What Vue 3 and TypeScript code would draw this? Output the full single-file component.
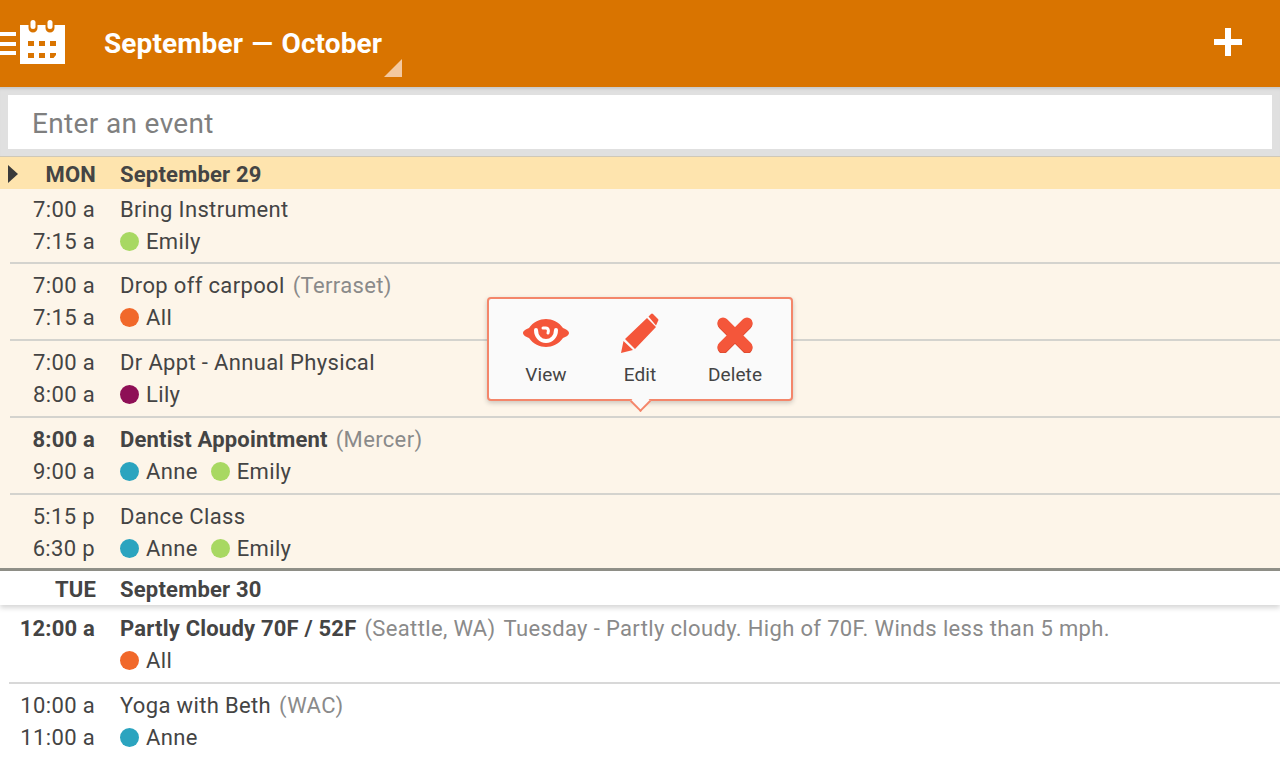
<script setup lang="ts">
interface Person { name: string; color: string }
interface Row { start: string; end: string; title: string; loc?: string; desc?: string; bold?: boolean; people: Person[] }
const emily = { name: 'Emily', color: '#a8d862' }
const all = { name: 'All', color: '#f1682a' }
const lily = { name: 'Lily', color: '#8e0f56' }
const anne = { name: 'Anne', color: '#2ba4bf' }
const monday: Row[] = [
  { start: '7:00 a', end: '7:15 a', title: 'Bring Instrument', people: [emily] },
  { start: '7:00 a', end: '7:15 a', title: 'Drop off carpool', loc: '(Terraset)', people: [all] },
  { start: '7:00 a', end: '8:00 a', title: 'Dr Appt - Annual Physical', people: [lily] },
  { start: '8:00 a', end: '9:00 a', title: 'Dentist Appointment', loc: '(Mercer)', bold: true, people: [anne, emily] },
  { start: '5:15 p', end: '6:30 p', title: 'Dance Class', people: [anne, emily] },
]
const tuesday: Row[] = [
  { start: '12:00 a', end: '', title: 'Partly Cloudy 70F / 52F', loc: '(Seattle, WA)', desc: 'Tuesday - Partly cloudy. High of 70F. Winds less than 5 mph.', bold: true, people: [all] },
  { start: '10:00 a', end: '11:00 a', title: 'Yoga with Beth', loc: '(WAC)', people: [anne] },
]
</script>

<template>
  <div class="page">
    <header class="bar">
      <div class="menu"><i></i><i></i><i></i></div>
      <svg class="cal" width="45" height="44" viewBox="0 0 45 44">
        <path fill="#fff" fill-rule="evenodd" d="M0 5h8.500v3a4.500 4.500 0 0 0 9 0V5h8v3a4.500 4.500 0 0 0 9 0V5H45v39H0Z M8 21v5h6v-5Z M19 21v5h6v-5Z M30 21v5h6v-5Z M8 33v5h6v-5Z M19 33v5h6v-5Z M30 33v5h3.500l2.500-3v-2Z"/>
        <rect x="10.500" y="0" width="5" height="9" rx="2.500" fill="#fff"/>
        <rect x="27.500" y="0" width="5" height="9" rx="2.500" fill="#fff"/>
      </svg>
      <h1 class="title">September — October</h1>
      <span class="corner"></span>
      <svg class="plus" width="28" height="28" viewBox="0 0 28 28"><path fill="#fff" d="M11 0h6v11h11v6H17v11h-6V17H0v-6h11Z"/></svg>
    </header>
    <div class="search"><div class="input">Enter an event</div></div>
    <section class="day today">
      <div class="day-head">
        <span class="arrow"></span>
        <span class="dow">MON</span>
        <span class="date">September 29</span>
      </div>
      <div v-for="(r, i) in monday" :key="i" class="row">
        <div class="times"><div :class="{ strong: r.bold }">{{ r.start }}</div><div>{{ r.end }}</div></div>
        <div class="body">
          <div class="line"><span :class="{ strong: r.bold }">{{ r.title }}</span><span v-if="r.loc" class="muted">{{ r.loc }}</span></div>
          <div class="line people"><span v-for="p in r.people" :key="p.name" class="person"><i class="dot" :style="{ background: p.color }"></i>{{ p.name }}</span></div>
        </div>
      </div>
    </section>
    <section class="day next">
      <div class="day-head">
        <span class="dow">TUE</span>
        <span class="date">September 30</span>
      </div>
      <div v-for="(r, i) in tuesday" :key="i" class="row">
        <div class="times"><div :class="{ strong: r.bold }">{{ r.start }}</div><div>{{ r.end }}</div></div>
        <div class="body">
          <div class="line"><span :class="{ strong: r.bold }">{{ r.title }}</span><span v-if="r.loc" class="muted">{{ r.loc }}</span><span v-if="r.desc" class="muted">{{ r.desc }}</span></div>
          <div class="line people"><span v-for="p in r.people" :key="p.name" class="person"><i class="dot" :style="{ background: p.color }"></i>{{ p.name }}</span></div>
        </div>
      </div>
    </section>
    <div class="pop">
      <div class="act">
        <svg class="eye" width="46" height="28" viewBox="0 0 46 28">
          <path fill="#f4563a" d="M6 9C10 3 17 0 23 0s13 3 17 9c3 1 6 3 6 5s-3 4-6 5c-4 6-11 9-17 9S10 25 6 19c-3-1-6-3-6-5s3-4 6-5Z"/>
          <path fill="none" stroke="#fff" stroke-width="4" stroke-linecap="round" d="M13 11c0 6 4 11 10 11s10-5 10-11"/>
          <path fill="none" stroke="#fff" stroke-width="3" stroke-linecap="round" d="M20 9h3c2 0 3 2 2 5"/>
        </svg>
        <span>View</span>
      </div>
      <div class="act">
        <svg class="pen" width="38" height="40" viewBox="0 0 38 40">
          <path fill="#f4563a" d="M0 40 2.500 28 12 37ZM4 26 26 5l9 9-21 22ZM27.500 3.500 30 1q1-1 2 0l5 5q1 1 0 2l-2 4.500Z"/>
        </svg>
        <span>Edit</span>
      </div>
      <div class="act">
        <svg class="del" width="36" height="36" viewBox="0 0 36 36">
          <path fill="none" stroke="#d8462c" stroke-width="11" stroke-linecap="round" d="M6 7l24 24M30 7 6 31"/>
          <path fill="none" stroke="#f4563a" stroke-width="11" stroke-linecap="round" d="M6 6l24 24M30 6 6 30"/>
        </svg>
        <span>Delete</span>
      </div>
      <span class="tip"></span>
    </div>
  </div>
</template>

<style scoped>
.page { position: relative; width: 1280px; height: 757px; overflow: hidden; background: #fff; font-family: Roboto, sans-serif; font-size: 22px; letter-spacing: .35px; color: #444; }
.bar { position: relative; height: 87px; background: #d97400; display: flex; align-items: flex-start; }
.menu { width: 16px; margin-top: 32px; display: flex; flex-direction: column; gap: 5.500px; }
.menu i { display: block; height: 4px; background: #fff; }
.cal { margin: 20px 0 0 4px; }
.title { margin: 27px 0 0 39px; font-size: 28px; line-height: 34px; font-weight: 700; letter-spacing: .1px; word-spacing: 1.500px; color: #fff; white-space: nowrap; }
.corner { position: absolute; left: 384px; top: 59px; width: 18px; height: 18px; background: #f4c9a0; clip-path: polygon(100% 0, 100% 100%, 0 100%); }
.plus { position: absolute; left: 1214px; top: 28px; }
.search { height: 69px; box-sizing: border-box; padding: 8px; background: #e0e0e0; box-shadow: inset 0 4px 3px -2px #c8c8c8; }
.input { height: 54px; background: #fff; padding-left: 24px; font-size: 28px; line-height: 58px; color: #7f7f7f; }
.day-head { display: flex; font-weight: 700; letter-spacing: .2px; height: 32px; line-height: 36px; position: relative; }
.dow { width: 96px; text-align: right; }
.date { margin-left: 24px; }
.arrow { position: absolute; left: 8px; top: 8px; border-left: 10px solid #3a3a3a; border-top: 9px solid transparent; border-bottom: 9px solid transparent; }
.today { background: #fdf5e9; border-top: 1px solid #cfc8b8; }
.today .day-head { background: #fee4ae; }
.today .row { height: 77px; margin-left: 10px; border-bottom: 2px solid #d4d3ce; padding-top: 6px; }
.today .row:nth-child(2) { height: 75px; padding-top: 5px; }
.today .row:last-child { border-bottom: 0; height: 73px; }
.today .times { width: 85px; }
.next { border-top: 3px solid #909088; }
.next .day-head { height: 34px; line-height: 38px; box-shadow: 0 3px 5px rgba(0,0,0,.16); }
.row { display: flex; height: 77px; box-sizing: border-box; }
.times { width: 95px; flex: none; text-align: right; line-height: 32px; }
.body { margin-left: 25px; flex: 1; min-width: 0; }
.line { display: flex; gap: 8px; line-height: 32px; white-space: nowrap; }
.strong { font-weight: 700; letter-spacing: .2px; }
.muted { color: #8a8a8a; }
.people { gap: 13px; }
.person { display: flex; align-items: center; }
.dot { width: 19px; height: 19px; border-radius: 50%; margin-right: 7px; margin-top: -1px; }
.next .row:nth-child(2) { padding-top: 8px; }
.next .row:nth-child(3) { border-top: 2px solid #d8d8d8; margin-left: 9px; padding-top: 6px; }
.next .row:nth-child(3) .times { width: 86px; }
.pop { position: absolute; left: 487px; top: 297px; width: 306px; height: 104px; box-sizing: border-box; background: #fafafa; border: 2px solid #f4866a; border-radius: 4px; box-shadow: 0 2px 5px rgba(0,0,0,.2); }
.act { position: absolute; top: 0; width: 96px; height: 100%; display: flex; flex-direction: column; align-items: center; font-size: 19px; letter-spacing: .1px; color: #444; }
.act:nth-child(1) { left: 9px; }
.act:nth-child(2) { left: 103px; }
.act:nth-child(3) { left: 198px; }
.act svg { position: absolute; }
.eye { top: 20px; }
.pen { top: 14px; }
.del { top: 18px; }
.act span { position: absolute; top: 63px; line-height: 26px; }
.tip { position: absolute; left: 144px; top: 95px; width: 13px; height: 13px; background: #fafafa; border-right: 2px solid #f4866a; border-bottom: 2px solid #f4866a; transform: rotate(45deg); }
</style>

<style>
html, body { margin: 0; }
</style>
